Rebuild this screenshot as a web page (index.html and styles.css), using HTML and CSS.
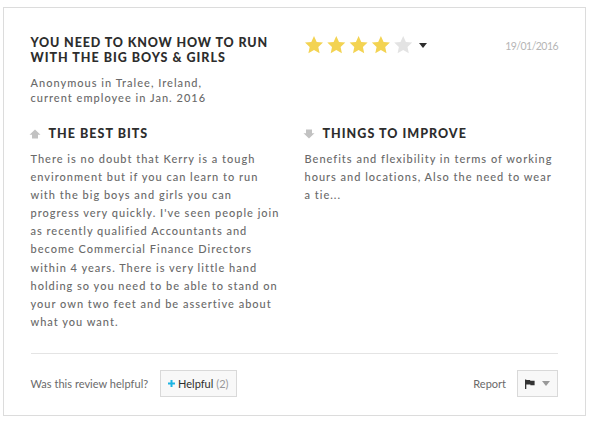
FILE: index.html
```html
<!DOCTYPE html>
<html lang="en">
<head>
    <meta charset="UTF-8">
    <meta name="viewport" content="width=device-width, initial-scale=1.0">
    <title>Employee Review</title>
    <link rel="stylesheet" href="styles.css">
</head>
<body>
    <article class="review">
        <header class="review-header">
            <div class="review-intro">
                <h2 class="review-title">You need to know how to run<br><span class="title-wide">with the big boys &amp; girls</span></h2>
                <p class="review-author">Anonymous in Tralee, Ireland,<br>current employee in Jan. 2016</p>
            </div>
            <div class="review-meta">
                <div class="rating">
                    <svg class="stars" width="108" height="18" viewBox="0 0 108 18">
                        <defs>
                            <path id="star" d="M9 0 L11.7 5.9 L18 6.6 L13.3 10.9 L14.6 17.3 L9 14.1 L3.4 17.3 L4.7 10.9 L0 6.6 L6.3 5.9 Z"/>
                        </defs>
                        <use href="#star" class="star-on"/>
                        <use href="#star" class="star-on" x="22.3"/>
                        <use href="#star" class="star-on" x="44.6"/>
                        <use href="#star" class="star-on" x="66.9"/>
                        <use href="#star" class="star-off" x="89.2"/>
                    </svg>
                    <span class="caret caret-dark"></span>
                </div>
                <time class="review-date">19/01/2016</time>
            </div>
        </header>

        <div class="review-body">
            <section>
                <h3 class="section-title">
                    <svg class="arrow" width="12" height="10" viewBox="0 0 12 10"><path d="M6 0.5 L11.5 5.7 H9 V9.5 H3 V5.7 H0.5 Z"/></svg>
                    The best bits
                </h3>
                <p class="section-text">There is no doubt that Kerry is a tough<br>environment but if you can learn to run<br>with the big boys and girls you can<br>progress very quickly. I've seen people join<br>as recently qualified Accountants and<br>become Commercial Finance Directors<br>within 4 years. There is very little hand<br>holding so you need to be able to stand on<br>your own two feet and be assertive about<br>what you want.</p>
            </section>
            <section>
                <h3 class="section-title">
                    <svg class="arrow" width="12" height="10" viewBox="0 0 12 10"><path d="M6 9.5 L11.5 4.3 H9 V0.5 H3 V4.3 H0.5 Z"/></svg>
                    Things to improve
                </h3>
                <p class="section-text">Benefits and flexibility in terms of working<br>hours and locations, Also the need to wear<br>a tie...</p>
            </section>
        </div>

        <footer class="review-footer">
            <span class="helpful-label">Was this review helpful?</span>
            <button class="btn btn-helpful" type="button">
                <svg class="plus" width="7" height="7" viewBox="0 0 7 7"><path d="M3.5 0 V7 M0 3.5 H7"/></svg>
                <span class="btn-text">Helpful</span>
                <span class="count">(2)</span>
            </button>
            <span class="report-label">Report</span>
            <button class="btn btn-report" type="button" aria-label="Report this review">
                <svg class="flag" width="10" height="10" viewBox="0 0 10 10"><path d="M0 0.5 H1.3 V1 H5.2 V1.8 H9.6 V6.2 H5.4 V5.4 H1.3 V10 H0 Z"/></svg>
                <span class="caret caret-grey"></span>
            </button>
        </footer>
    </article>
</body>
</html>
```
FILE: styles.css
```css
body {
    margin: 0;
    padding: 7px 0 0 3px;
    font-family: Lato, 'Open Sans', sans-serif;
    font-size: 11px;
    color: #6a6a6a;
    background: #fff;
}

h2, h3, p {
    margin: 0;
}

/* ===== Review Card ===== */
.review {
    box-sizing: border-box;
    width: 583px;
    height: 409px;
    padding: 27px 27px 0 26.5px;
    border: 1px solid #dcdcdc;
}

.review-header,
.review-body {
    display: grid;
    grid-template-columns: 274px 1fr;
}

.review-title {
    font-size: 12.5px;
    line-height: 15px;
    font-weight: 900;
    letter-spacing: 0.88px;
    text-transform: uppercase;
    white-space: nowrap;
    color: #2d2d2d;
}

.title-wide {
    letter-spacing: 1px;
}

.review-author {
    margin-top: 10px;
    line-height: 15px;
    font-weight: 500;
    letter-spacing: 1.02px;
}

/* ===== Rating ===== */
.review-meta {
    display: flex;
    justify-content: space-between;
    align-items: flex-start;
}

.rating {
    display: flex;
    align-items: center;
    gap: 6px;
    padding: 1px 0 0 0.5px;
}

.star-on {
    fill: #f3d352;
}

.star-off {
    fill: #e3e3e3;
}

.caret {
    border-left: 4.5px solid transparent;
    border-right: 4.5px solid transparent;
    border-top: 5px solid;
}

.caret-dark {
    color: #2d2d2d;
    margin-top: 1px;
}

.caret-grey {
    color: #999;
}

.review-date {
    margin-top: 4px;
    font-size: 10.5px;
    line-height: 14px;
    letter-spacing: -0.55px;
    color: #b5b5b5;
}

/* ===== Best Bits / Improve ===== */
.review-body {
    margin-top: 21px;
    height: 227px;
    border-bottom: 1px solid #e4e4e4;
}

.section-title {
    display: flex;
    align-items: center;
    gap: 8px;
    margin-left: -2px;
    height: 16px;
    font-size: 12.5px;
    line-height: 16px;
    font-weight: 900;
    letter-spacing: 1.03px;
    text-transform: uppercase;
    color: #2d2d2d;
}

.arrow {
    fill: #c2c2c2;
}

.section-text {
    margin-top: 8px;
    line-height: 18.1px;
    font-weight: 500;
    letter-spacing: 1px;
    white-space: nowrap;
}

/* ===== Footer ===== */
.review-footer {
    display: flex;
    align-items: center;
    padding-top: 16px;
}

.btn {
    display: flex;
    align-items: center;
    box-sizing: border-box;
    height: 27px;
    padding: 0 7px;
    border: 1px solid #d9d9d9;
    background: #f8f8f8;
    font-family: inherit;
    font-size: 11px;
}

.btn-helpful {
    width: 77px;
    margin-left: 10.5px;
}

.helpful-label {
    width: 119px;
    white-space: nowrap;
    letter-spacing: 0.03px;
}

.plus {
    margin-right: 3px;
    fill: none;
    stroke: #1cb4e3;
    stroke-width: 2;
}

.btn-text {
    margin-right: 3px;
    color: #2d2d2d;
}

.count {
    color: #999;
}

.report-label {
    margin-left: auto;
}

.btn-report {
    width: 41px;
    margin-left: 11px;
    gap: 7px;
}

.flag {
    fill: #333;
}
```
